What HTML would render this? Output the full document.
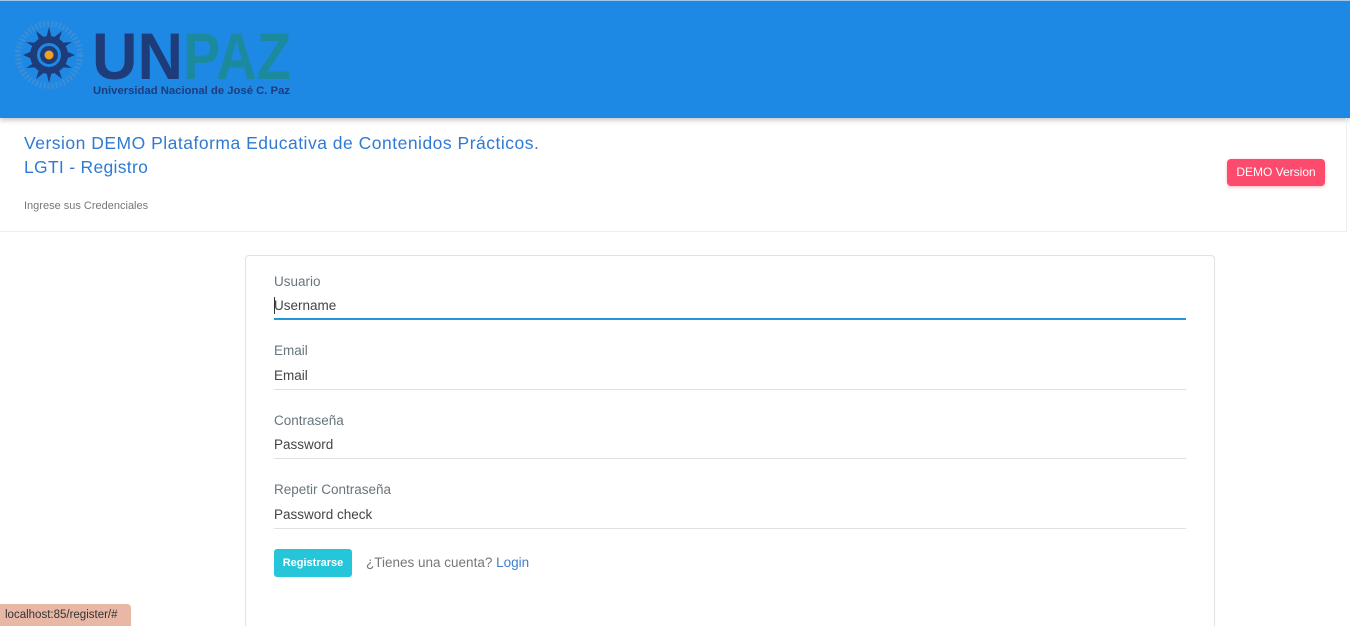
<!DOCTYPE html>
<html style="overflow:hidden;height:626px"><head><meta charset="utf-8"><style>
*{box-sizing:border-box;margin:0;padding:0}
body{width:1350px;height:626px;overflow:hidden;background:#fff;font-family:"Liberation Sans",sans-serif;position:relative}
.top{position:absolute;left:0;top:0;width:1350px;height:118px;background:#1e88e5;border-top:1px solid #9ec7ef;box-shadow:0 2px 5px rgba(0,0,0,.25)}
.band{position:absolute;left:0;top:118px;width:1347px;height:114px;border-bottom:1px solid #eceff1;border-right:1px solid #eceff1}
.t1{position:absolute;left:24px;top:133px;font-size:17.5px;color:#2f7ad3;letter-spacing:.5px}
.t2{position:absolute;left:24px;top:157px;font-size:17.5px;color:#2f7ad3;letter-spacing:.3px}
.t3{position:absolute;left:24px;top:200px;font-size:11px;color:#777}
.demo{position:absolute;left:1227px;top:159px;width:98px;height:27px;background:#fc4b6c;color:#fff;font-size:12px;border-radius:4px;text-align:center;line-height:27px;box-shadow:0 1px 3px rgba(252,75,108,.4)}
.card{position:absolute;left:245px;top:255px;width:970px;height:371px;border:1px solid #dfe3e6;border-bottom:none;border-radius:4px 4px 0 0}
.lab{position:absolute;left:274px;font-size:13.5px;color:#67757c}
.val{position:absolute;left:274px;font-size:13.5px;color:#444}
.line{position:absolute;left:274px;width:912px;height:1px;background:#e0e0e0}
.btn{position:absolute;left:274px;top:549px;width:78px;height:28px;background:#26c6da;color:#fff;font-size:11px;font-weight:bold;border-radius:3px;text-align:center;line-height:28px}
.q{position:absolute;left:366px;top:555px;font-size:13.5px;color:#777}
.q span{color:#3f7fc9}
.status{position:absolute;left:0;top:604px;width:131px;height:22px;background:#e8b7a6;border-top-right-radius:4px;font-size:11.5px;color:#333;line-height:22px;padding-left:5px}
</style></head><body>
<div class="top">
<svg width="300" height="110" viewBox="0 0 300 110" style="position:absolute;left:0;top:0">
<circle cx="49" cy="54" r="31" fill="none" stroke="#4a92cf" stroke-width="6" stroke-dasharray="2 2" opacity=".7"/>
<polygon fill="#1f3c7a" points="49,26 52,38 62,30 58,42 72,41 61,48 75,54 61,60 72,67 58,66 62,78 52,70 49,82 46,70 36,78 40,66 26,67 37,60 23,54 37,48 26,41 40,42 36,30 46,38"/>
<circle cx="49" cy="54" r="19" fill="#1f3c7a"/>
<circle cx="49" cy="54" r="12" fill="#1e88e5"/>
<circle cx="49" cy="54" r="9" fill="#1f3c7a"/>
<circle cx="49" cy="54" r="4.5" fill="#f0a020"/>
<text x="92" y="78" font-family="Liberation Sans" font-weight="bold" font-size="66" fill="#1f3c7a" textLength="91" lengthAdjust="spacingAndGlyphs">UN</text>
<text x="183" y="78" font-family="Liberation Sans" font-weight="bold" font-size="66" fill="#1b8a9e" textLength="108" lengthAdjust="spacingAndGlyphs">PAZ</text>
<text x="93" y="93" font-family="Liberation Sans" font-weight="bold" font-size="11" fill="#1f3c7a" textLength="197" lengthAdjust="spacingAndGlyphs">Universidad Nacional de José C. Paz</text>
</svg>
</div>
<div class="band"></div>
<div class="t1">Version DEMO Plataforma Educativa de Contenidos Prácticos.</div>
<div class="t2">LGTI - Registro</div>
<div class="t3">Ingrese sus Credenciales</div>
<div class="demo">DEMO Version</div>
<div class="card"></div>
<div class="lab" style="top:274px">Usuario</div>
<div class="val" style="top:298px">Username</div>
<div style="position:absolute;left:274px;top:297px;width:1px;height:17px;background:#333"></div>
<div class="line" style="top:318px;height:2px;background:#1e9ad6"></div>
<div class="lab" style="top:343px">Email</div>
<div class="val" style="top:368px">Email</div>
<div class="line" style="top:389px"></div>
<div class="lab" style="top:413px">Contraseña</div>
<div class="val" style="top:437px">Password</div>
<div class="line" style="top:458px"></div>
<div class="lab" style="top:482px">Repetir Contraseña</div>
<div class="val" style="top:507px">Password check</div>
<div class="line" style="top:528px"></div>
<div class="btn">Registrarse</div>
<div class="q">¿Tienes una cuenta? <span>Login</span></div>
<div class="status">localhost:85/register/#</div>
</body></html>
